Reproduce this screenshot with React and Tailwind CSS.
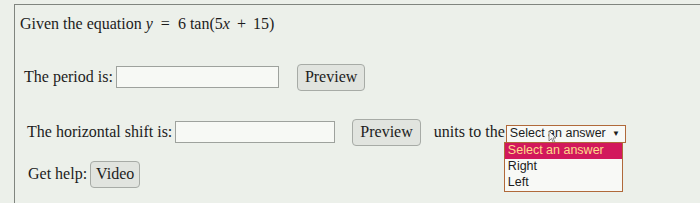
import React from "react";

const serif = { fontFamily: '"Liberation Serif", "Times New Roman", serif' };

const Btn = ({ children, className = "" }) => (
  <button
    className={`h-[27px] rounded-[4px] border border-[#a7aba6] bg-[#e1e4df] text-[16px] text-[#1c1c1c] leading-none ${className}`}
    style={serif}
  >
    {children}
  </button>
);

const Field = ({ className = "" }) => (
  <div className={`h-[22px] border border-[#9ea29d] bg-[#f7f9f5] ${className}`} />
);

const App = () => {
  return (
    <div className="w-[700px] h-[203px] bg-[#ecf0ea] pl-[14px] pt-[4px] overflow-hidden">
      <div
        className="h-full border-l border-t border-[#80857f] flex flex-col text-[16px] text-[#1c1c1c]"
        style={serif}
      >
        <div className="h-[37px] flex items-center pl-[5px]">
          <span>Given the equation&nbsp;</span>
          <span className="italic">y</span>
          <span className="mx-[8px]">=</span>
          <span>6</span>
          <span className="ml-[4px]">tan(5</span>
          <span className="italic">x</span>
          <span className="mx-[7px]">+</span>
          <span>15)</span>
        </div>

        <div className="mt-[20px] h-[30px] flex items-center pl-[9px]">
          <span>The period is:</span>
          <Field className="ml-[3px] w-[163px]" />
          <Btn className="ml-[18px] px-[7px]">Preview</Btn>
        </div>

        <div className="mt-[25px] h-[30px] flex items-center pl-[12px]">
          <span>The horizontal shift is:</span>
          <Field className="ml-[3px] w-[160px]" />
          <Btn className="ml-[17px] px-[7px]">Preview</Btn>
          <span className="ml-[13px]">units to the</span>
          <div className="relative ml-[1px] mt-[3px]">
            <div
              className="w-[120px] h-[18px] border border-[#b0693a] bg-[#f8f9f6] flex items-center justify-between pl-[3px] pr-[5px] text-[12.5px]"
              style={{ fontFamily: '"Liberation Sans", Arial, sans-serif' }}
            >
              <span>Select an answer</span>
              <span className="text-[8px]">▼</span>
            </div>
            <svg
              className="absolute left-[42px] top-[5px]"
              width="9"
              height="14"
              viewBox="0 0 9 14"
            >
              <path d="M1 1 L1 11 L3.5 8.5 L5.5 13 L7 12.3 L5 8 L8 8 Z" fill="#f4f4f4" stroke="#6b6b6b" strokeWidth="0.8" />
            </svg>
            <div
              className="absolute left-[-2px] top-[17px] w-[119px] border border-[#b0693a] bg-[#f8f9f6] text-[12.5px] flex flex-col"
              style={{ fontFamily: '"Liberation Sans", Arial, sans-serif' }}
            >
              <div className="h-[16px] flex items-center pl-[3px] bg-[#d2185c] text-[#ffd98a]">
                Select an answer
              </div>
              <div className="h-[16px] flex items-center pl-[3px]">Right</div>
              <div className="h-[16px] flex items-center pl-[3px]">Left</div>
            </div>
          </div>
        </div>

        <div className="mt-[15px] h-[24px] flex items-center pl-[13px]">
          <span>Get help:</span>
          <Btn className="ml-[3px] h-[23px] px-[5px]">Video</Btn>
        </div>
      </div>
    </div>
  );
};

export default App;
